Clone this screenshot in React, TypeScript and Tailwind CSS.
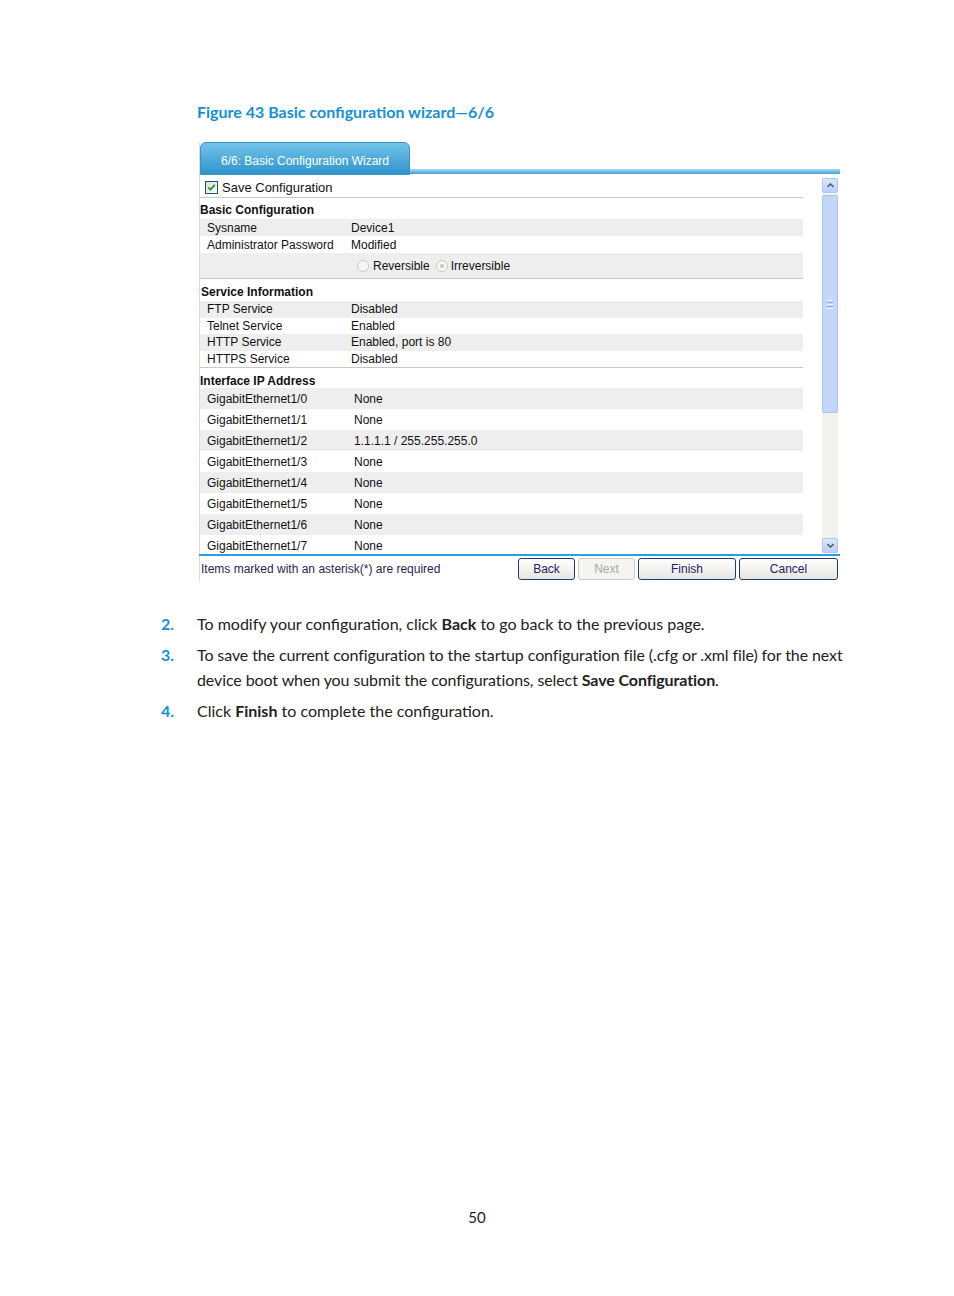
import React from 'react';

const basicRows = [
  { label: 'Sysname', value: 'Device1' },
  { label: 'Administrator Password', value: 'Modified' },
];

const serviceRows = [
  { label: 'FTP Service', value: 'Disabled' },
  { label: 'Telnet Service', value: 'Enabled' },
  { label: 'HTTP Service', value: 'Enabled, port is 80' },
  { label: 'HTTPS Service', value: 'Disabled' },
];

const interfaceRows = [
  { label: 'GigabitEthernet1/0', value: 'None' },
  { label: 'GigabitEthernet1/1', value: 'None' },
  { label: 'GigabitEthernet1/2', value: '1.1.1.1 / 255.255.255.0' },
  { label: 'GigabitEthernet1/3', value: 'None' },
  { label: 'GigabitEthernet1/4', value: 'None' },
  { label: 'GigabitEthernet1/5', value: 'None' },
  { label: 'GigabitEthernet1/6', value: 'None' },
  { label: 'GigabitEthernet1/7', value: 'None' },
];

function CheckBox() {
  return (
    <svg width="13" height="13" viewBox="0 0 13 13" className="shrink-0">
      <defs>
        <linearGradient id="cbg" x1="0" y1="0" x2="1" y2="1">
          <stop offset="0" stopColor="#dcdcd6" />
          <stop offset="1" stopColor="#ffffff" />
        </linearGradient>
      </defs>
      <rect x="0.5" y="0.5" width="12" height="12" fill="url(#cbg)" stroke="#1c5180" />
      <path d="M3.2 6.3 L5.4 8.6 L9.8 3.8" fill="none" stroke="#21a121" strokeWidth="1.8" />
    </svg>
  );
}

function Radio({ checked }: { checked?: boolean }) {
  return (
    <span className="w-[12px] h-[12px] rounded-full border border-[#c9c9c4] bg-[#f6f6f3] flex items-center justify-center shrink-0">
      {checked && <span className="w-[4px] h-[4px] rounded-full bg-[#c3c3bd]" />}
    </span>
  );
}

function ScrollButton({ down }: { down?: boolean }) {
  return (
    <div className="h-[15px] rounded-[2px] border border-[#b2c6f1] bg-gradient-to-b from-[#dce7fe] to-[#bccffb] flex items-center justify-center">
      <svg width="7" height="5" viewBox="0 0 7 5">
        <path
          d={down ? 'M0.5 1 L3.5 4 L6.5 1' : 'M0.5 4 L3.5 1 L6.5 4'}
          fill="none"
          stroke="#4d6185"
          strokeWidth="1.6"
        />
      </svg>
    </div>
  );
}

function Row({
  label,
  value,
  striped,
  height,
  labelWidth,
}: {
  label: string;
  value: string;
  striped: boolean;
  height: string;
  labelWidth: string;
}) {
  return (
    <div className={`flex items-center pl-[7px] ${height} ${striped ? 'bg-[#eeeeee]' : 'bg-white'}`}>
      <span className={`${labelWidth} shrink-0`}>{label}</span>
      <span>{value}</span>
    </div>
  );
}

export default function App() {
  return (
    <div className="w-[954px] h-[1296px] bg-white flex flex-col font-['Lato',sans-serif] text-[#222]">
      <h2 className="ml-[197px] mt-[102px] h-[20px] leading-[20px] text-[16px] font-bold text-[#1591d2]">
        Figure 43 Basic configuration wizard—6/6
      </h2>

      <div className="ml-[199px] mt-[20px] w-[641px] font-['Liberation_Sans',Arial,sans-serif] text-[12px] text-[#111]">
        <div className="flex items-end h-[33px] border-l border-[#dcdcdc]">
          <div className="w-[210px] h-[33px] rounded-t-[6px] border border-[#3f92c4] bg-gradient-to-b from-[#70c4ea] to-[#2e94cb] text-white text-[12px] flex items-center justify-center pt-[5px]">
            6/6: Basic Configuration Wizard
          </div>
          <div className="flex-1 h-[5px] mb-[1px] bg-gradient-to-b from-[#a9dcf3] to-[#3a9fd6]" />
        </div>

        <div className="flex h-[379px] border-l border-[#dcdcdc]">
          <div className="w-[603px] overflow-hidden">
            <div className="h-[23px] flex items-center gap-[4px] pl-[5px] pt-[3px] border-b border-[#c8c8c8] text-[13px]">
              <CheckBox />
              <span>Save Configuration</span>
            </div>

            <div className="h-[21px] flex items-center pt-[3px] font-bold">Basic Configuration</div>
            {basicRows.map((r, i) => (
              <Row key={r.label} {...r} striped={i % 2 === 0} height="h-[17px]" labelWidth="w-[144px]" />
            ))}
            <div className="h-[26px] flex items-center pl-[157px] pt-[1px] bg-[#eeeeee] border-b border-[#c8c8c8]">
              <Radio />
              <span className="ml-[4px]">Reversible</span>
              <span className="ml-[6px]">
                <Radio checked />
              </span>
              <span className="ml-[3px]">Irreversible</span>
            </div>

            <div className="h-[22px] flex items-center pt-[4px] pl-[1px] font-bold">Service Information</div>
            <div className="border-b border-[#c8c8c8]">
              {serviceRows.map((r, i) => (
                <Row key={r.label} {...r} striped={i % 2 === 0} height="h-[16.5px]" labelWidth="w-[144px]" />
              ))}
            </div>

            <div className="h-[20px] flex items-center pt-[6px] font-bold">Interface IP Address</div>
            {interfaceRows.map((r, i) => (
              <Row key={r.label} {...r} striped={i % 2 === 0} height="h-[21px]" labelWidth="w-[147px]" />
            ))}
          </div>

          <div className="flex-1" />

          <div className="w-[16px] mr-[2px] mt-[3px] mb-[1px] flex flex-col bg-[#f3f3ee]">
            <ScrollButton />
            <div className="mt-[2px] h-[218px] rounded-[2px] border border-[#aec2ee] bg-[#c4d6fc] flex flex-col items-center justify-center gap-[1px]">
              <span className="w-[6px] h-[1px] bg-[#eef4ff]" />
              <span className="w-[6px] h-[1px] bg-[#8fa9e6]" />
              <span className="w-[6px] h-[1px] bg-[#eef4ff]" />
              <span className="w-[6px] h-[1px] bg-[#8fa9e6]" />
              <span className="w-[6px] h-[1px] bg-[#eef4ff]" />
            </div>
            <div className="flex-1" />
            <ScrollButton down />
          </div>
        </div>

        <div className="h-[2px] bg-[#2aa0e0]" />

        <div className="h-[25px] flex items-center border-l border-[#dcdcdc] text-[#2a1f4f]">
          <span className="ml-[1px]">Items marked with an asterisk(*) are required</span>
          <div className="ml-auto mr-[2px] flex gap-[3px]">
            <button className="w-[57px] h-[22px] rounded-[3px] border border-[#1d3f6f] bg-gradient-to-b from-[#ffffff] to-[#e6e6e0] text-[#2b1a5e] text-[12px]">
              Back
            </button>
            <button className="w-[57px] h-[22px] rounded-[3px] border border-[#cbcbc3] bg-[#f4f4f0] text-[#a9a9a3] text-[12px]">
              Next
            </button>
            <button className="w-[98px] h-[22px] rounded-[3px] border border-[#1d3f6f] bg-gradient-to-b from-[#ffffff] to-[#e6e6e0] text-[#2b1a5e] text-[12px]">
              Finish
            </button>
            <button className="w-[99px] h-[22px] rounded-[3px] border border-[#1d3f6f] bg-gradient-to-b from-[#ffffff] to-[#e6e6e0] text-[#2b1a5e] text-[12px]">
              Cancel
            </button>
          </div>
        </div>
      </div>

      <ol className="mt-[30px] flex flex-col gap-[6px] text-[16px] leading-[25px] text-[#222]">
        <li className="flex">
          <span className="ml-[161px] w-[36px] font-bold text-[#1591d2]">2.</span>
          <span>
            To modify your configuration, click <b>Back</b> to go back to the previous page.
          </span>
        </li>
        <li className="flex">
          <span className="ml-[161px] w-[36px] font-bold text-[#1591d2]">3.</span>
          <span className="whitespace-nowrap tracking-[-0.1px]">
            To save the current configuration to the startup configuration file (.cfg or .xml file) for the next
            <br />
            device boot when you submit the configurations, select <b>Save Configuration</b>.
          </span>
        </li>
        <li className="flex">
          <span className="ml-[161px] w-[36px] font-bold text-[#1591d2]">4.</span>
          <span>
            Click <b>Finish</b> to complete the configuration.
          </span>
        </li>
      </ol>

      <div className="mt-auto mb-[69px] h-[20px] leading-[20px] text-center text-[15px] text-[#222]">50</div>
    </div>
  );
}
